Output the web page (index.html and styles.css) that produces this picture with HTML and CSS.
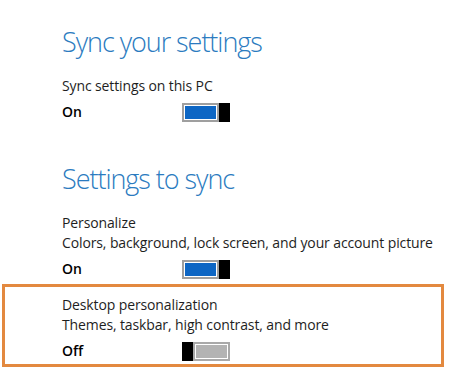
FILE: index.html
```html
<!DOCTYPE html>
<html>
<head>
<meta charset="utf-8">
<link rel="stylesheet" href="styles.css">
</head>
<body>
<div class="page">
  <section class="group first">
    <h1 class="heading">Sync your settings</h1>
    <div class="setting">
      <div class="label">Sync settings on this PC</div>
      <div class="state">
        <span class="state-text">On</span>
        <span class="toggle on"><span class="track"><span class="fill"></span></span><span class="thumb"></span></span>
      </div>
    </div>
  </section>
  <section class="group second">
    <h1 class="heading">Settings to sync</h1>
    <div class="setting">
      <div class="label">Personalize</div>
      <div class="desc">Colors, background, lock screen, and your account picture</div>
      <div class="state">
        <span class="state-text">On</span>
        <span class="toggle on"><span class="track"><span class="fill"></span></span><span class="thumb"></span></span>
      </div>
    </div>
  </section>
  <div class="highlight">
    <div class="label">Desktop personalization</div>
    <div class="desc">Themes, taskbar, high contrast, and more</div>
    <div class="state">
      <span class="state-text">Off</span>
      <span class="toggle off"><span class="thumb"></span><span class="track"><span class="fill"></span></span></span>
    </div>
  </div>
</div>
</body>
</html>
```

FILE: styles.css
```css
html, body {
  margin: 0;
  padding: 0;
  background: #ffffff;
}

.page {
  width: 449px;
  height: 377px;
  overflow: hidden;
  font-family: "Open Sans", "Liberation Sans", sans-serif;
  color: #1e1e1e;
}

.group {
  padding-left: 62px;
}

.group.first {
  padding-top: 24px;
}

.group.second {
  margin-top: 39px;
}

.heading {
  margin: 0;
  font-size: 27px;
  line-height: 36px;
  font-weight: 300;
  color: #2b7bc0;
  letter-spacing: -1.05px;
}

.setting {
  margin-top: 16px;
}

.label, .desc {
  font-size: 14px;
  line-height: 20px;
  letter-spacing: -0.12px;
}

.state {
  display: flex;
  align-items: center;
  height: 20px;
  margin-top: 6px;
}

.state-text {
  width: 120px;
  font-size: 14px;
  line-height: 20px;
  font-weight: 600;
  color: #000;
}

.toggle {
  display: flex;
  height: 19px;
  width: 48px;
}

.track {
  box-sizing: border-box;
  width: 37px;
  height: 19px;
  border: 2px solid #9f9f9f;
  padding: 1px;
  background: #fff;
}

.fill {
  display: block;
  height: 100%;
  background: #0d66c4;
}

.toggle.off .track {
  border-color: #a9a9a9;
}

.toggle.off .fill {
  background: #b3b3b3;
}

.thumb {
  width: 11px;
  height: 19px;
  background: #000;
}

.highlight {
  margin: 5px 0 0 2px;
  width: 442px;
  box-sizing: border-box;
  border: 3px solid #e3893f;
  padding: 8px 0 3px 57px;
}
```
